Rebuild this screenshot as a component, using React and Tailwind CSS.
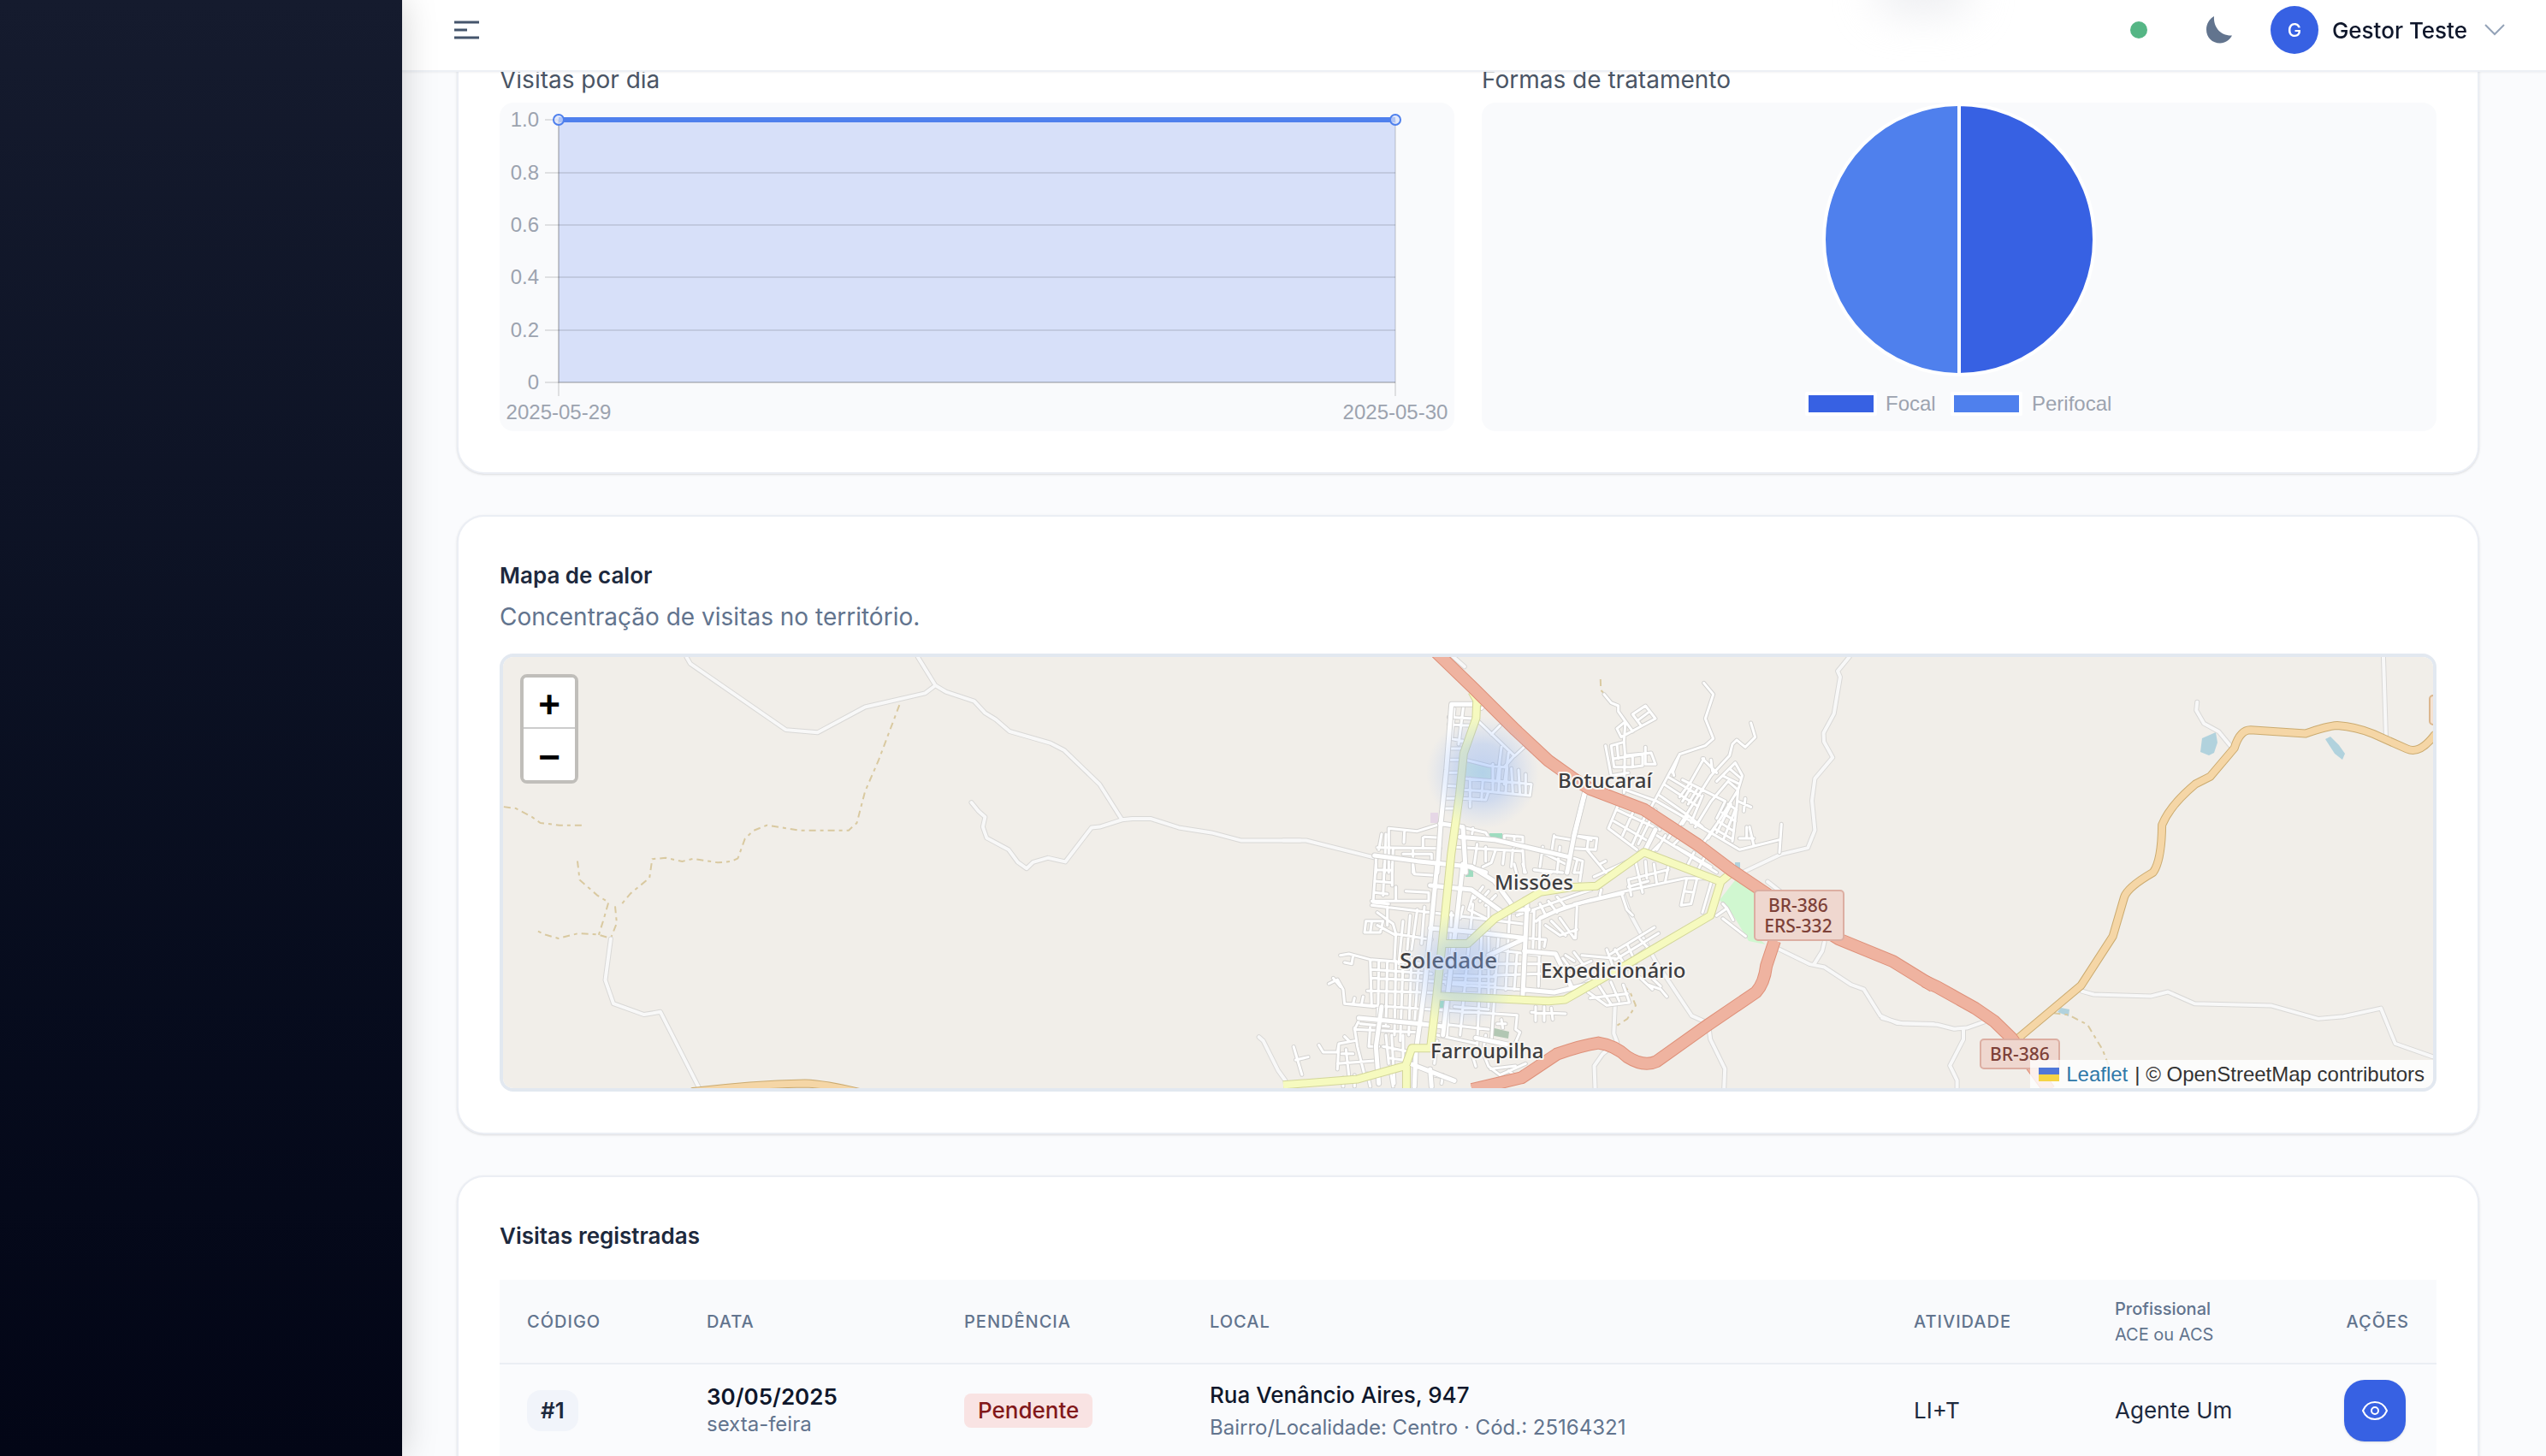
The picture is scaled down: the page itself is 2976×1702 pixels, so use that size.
import { Fragment, useId } from 'react';

const visits = [
  {
    id: 1,
    date: '30/05/2025',
    weekday: 'sexta-feira',
    status: 'Pendente',
    address: 'Rua Venâncio Aires, 947',
    detail: 'Bairro/Localidade: Centro · Cód.: 25164321',
    activity: 'LI+T',
    agent: 'Agente Um',
  },
];

const yTicks = [
  { label: '1.0', y: 20 },
  { label: '0.8', y: 82 },
  { label: '0.6', y: 143 },
  { label: '0.4', y: 204 },
  { label: '0.2', y: 266 },
  { label: '0', y: 327 },
];

// Each tile keeps its own coordinate space, strokes stay in map pixels
const tiles = {
  west: 'translate(520 590) scale(.6378 .4592)',
  center: 'translate(1500 750) scale(.4847 .3444)',
  east: 'translate(2200 750) scale(.4949 .3827)',
  north: 'translate(1540 760) scale(.3333)',
  south: 'translate(1540 1010) scale(.3333)',
  botucarai: 'translate(1840 780) scale(.3333)',
};

const tracks = [
  { tile: 'west', d: 'M108 769L130 773L160 795L175 810L210 816L258 816M833 510L795 650L770 730L755 810L740 829L650 829L590 816L565 830L550 850L537 900L525 908L500 911L455 901L435 908L405 899L380 902L375 950L340 990L325 1015M243 907L247 955L280 995L300 1012L290 1060L282 1095M312 1022L315 1065L304 1104L280 1094L245 1091L208 1104L185 1095L165 1082' },
  { tile: 'center', d: 'M765 128L766 165L778 182M820 1165L838 1195L850 1235L830 1280L800 1308' },
  { tile: 'east', d: 'M405 1135L440 1140L485 1170L520 1245L540 1310L570 1350' },
];

const lanes = [
  { tile: 'west', d: 'M443 388L450 405L625 573L683 580L770 515L880 480L899 460M867 388L899 460L918 476L970 500L990 530L1010 547L1035 577L1110 607L1135 625L1200 712L1241 802M965 758L978 780L990 795L986 820L993 848L1033 878L1050 910L1066 926L1078 910L1105 899L1137 909L1185 822L1200 820L1241 802L1260 799L1293 799L1345 822L1405 835L1460 855L1568 855M304 1105L294 1210L309 1270L365 1298L395 1291L466 1485M1492 1355L1500 1365L1527 1440L1540 1465' },
  { tile: 'center', d: 'M0 675L55 675L225 735M1365 52L1337 100L1343 120L1328 245L1303 310L1304 340L1325 393L1282 465L1275 540L1282 640L1265 700L1200 722L1105 785M820 860L835 920L900 1090L985 1270L1025 1295L1030 1350L1065 1450L1063 1515M800 1235L797 1330L805 1360L770 1400L750 1440L752 1515M1190 1040L1270 1095L1305 1105L1370 1165L1400 1180L1440 1270L1480 1295L1568 1298M1305 1020L1300 1050L1280 1095M405 45L437 85M1168 815L1200 850' },
  { tile: 'east', d: 'M744 185L742 210L760 250L795 275L825 322M1184 47L1190 290M472 1068L500 1078L635 1083L675 1070L738 1106L920 1112L1030 1152L1090 1145L1178 1120L1212 1228L1300 1268M0 1150L50 1167L130 1170L170 1183L200 1180L240 1162M192 1183L192 1215L160 1295L177 1340L177 1365' },
];

const streets = [
  { tile: 'north', d: 'M565 250L690 370L655 410L600 405L520 385M640 265L610 295M730 335L690 372M645 340L630 460M670 360L655 470M575 205L590 190M460 235L545 240M460 260L540 265M465 310L520 320M460 345L510 345M455 385L505 385M450 430L500 430M445 475L495 478M445 520L490 520M440 555L480 555M512 195L495 330M480 205L470 310M515 450L700 465L750 470L745 510L590 495M510 490L600 495L590 525L505 520M535 450L535 550M580 455L575 525M615 400L615 490M640 410L635 495M665 410L660 500M680 415L685 500M705 420L710 505M730 435L730 508M430 610L350 635L250 625L250 780M305 635L303 675M225 645L215 700M210 692L430 695M240 645L235 780M265 700L262 780M375 655L430 658M370 658L370 695M335 700L335 780M300 715L400 715L400 740M205 722L205 780M545 625L540 660M500 620L590 640L605 665M660 650L720 655L720 690M655 650L655 675M690 652L690 690M640 670L720 675M470 690L720 705M560 680L550 750M590 690L590 740M625 700L610 745L580 760M655 705L650 750M685 700L680 760M720 700L725 780M830 650L820 715M830 655L890 665M900 650L960 665M790 690L780 760M850 690L840 780M770 700L870 750M760 770L860 780M910 740L900 780' },
  { tile: 'south', d: 'M205 0L195 135L250 140M235 0L230 110M262 0L262 75M205 20L262 22M200 60L260 65M200 100L245 105M335 0L340 35L410 40M310 95L390 100L390 130L190 130M275 80L275 130M245 150L245 215M190 145L480 180L720 210M170 200L165 240L220 240L230 200L170 200M190 205L185 240M210 170L265 210M210 215L275 250M265 210L275 245L400 265M275 245L270 340M300 200L285 350M325 180L315 300M350 160L330 300M375 150L365 280M80 320L110 315L185 335L190 500M95 345L120 350L125 320M40 420L70 405L90 440L95 490L200 500M55 400L80 430M125 490L130 470M155 490L160 465M215 340L212 540M245 340L240 560M275 340L270 600M300 350L290 620M330 330L320 600M355 360L340 560M190 335L380 350M190 370L400 385M190 400L380 410L620 420M175 445L560 455M95 490L400 510L700 530M150 540L130 580L350 590M150 560L250 570M470 170L455 600M545 140L500 600M575 250L560 640M600 130L600 500M635 250L610 620M675 150L660 440M450 350L600 365M450 390L620 395M450 420L720 440M480 500L600 510M430 560L600 580M420 600L560 630M700 530L695 580L710 590L680 660M600 250L800 265L795 290M620 300L780 320M620 350L780 350M620 390L780 385M650 170L760 165M760 160L755 310M780 200L775 430M700 310L690 440M5 635L20 660L70 660L75 630L130 620M75 630L70 720M95 605L110 620M70 700L200 690M100 650L110 740M85 665L125 665M130 575L140 640L165 740M260 600L270 770M240 600L250 700M185 570L180 640L215 640M175 735L185 780M255 720L265 780M130 740L130 780M90 750L90 780M230 640L330 660M250 680L320 690M300 600L300 680M420 620L410 700M590 600L580 660L600 710L640 740L730 700M670 725L690 740M540 660L555 710M630 560L660 560M645 545L650 575M750 520L870 525M765 500L765 550M795 500L795 550M820 505L825 545M580 80L550 120M600 95L570 130M625 110L590 145M510 150L500 190M545 110L530 160L590 190M700 180L900 110L960 90M765 200L830 170L960 125M780 140L800 180M810 130L840 170M840 115L870 150M800 215L850 250L910 230M820 200L870 250M850 190L900 260M910 150L905 260M690 0L700 40M720 0L730 30M760 20L820 30M870 320L900 340M860 330L890 370L960 340M900 310L930 350M440 740L435 770M400 740L430 745' },
  { tile: 'botucarai', d: 'M105 95L130 125L155 135L155 155L180 190L175 260L178 300L175 440M205 165L250 135L285 180L165 245L150 215L180 190L205 225M205 165L235 205M225 185L265 155M110 275L130 380L190 370M130 275L175 262M130 275L140 350L200 350L240 345L240 305L140 320M150 270L155 320M178 310L270 300L285 340L250 340L250 280M205 310L205 350M455 55L488 95L460 180L488 250L460 275L370 305L265 500M370 305L345 370M620 195L635 245L600 280L570 255L555 270L545 310L480 380L360 570M180 430L290 470L470 575M160 470L120 565L220 640M150 500L300 570M140 540L260 610M210 500L170 590M250 520L205 620M285 500L225 620M300 450L400 520L450 560M315 410L430 485M330 385L440 450M345 360L350 380M455 320L410 400L370 455M450 320L500 370M480 325L485 365M380 395L530 470L500 530M410 420L380 470M430 430L400 480M450 450L410 545M480 470L425 560M500 400L565 335L590 380L575 430L540 400M520 380L580 410M545 355L585 390M540 400L480 470M575 430L470 600M540 480L570 500M520 510L565 540M505 540L560 575M490 565L550 600M575 430L570 490L555 610M550 480L500 580M565 500L525 600M470 575L580 640L720 605M720 650L727 550M575 470L620 490M600 460L595 505M630 625L615 560M580 600L630 600M605 560L605 600M400 520L380 550M450 620L500 550M330 600L350 570M290 590L500 720M360 630L480 700M350 620L370 600M320 590L290 640M420 650L400 690M455 670L435 710M300 620L270 650M250 680L255 740M280 690L290 760M330 700L320 750M190 745L330 710M190 745L200 800M190 770L260 750M215 680L240 790M0 830L200 780L390 740L470 740M395 740L375 835L410 830L430 745M385 785L420 790M485 740L450 860M0 590L80 600L75 640L0 635M50 600L45 640L120 730M70 735L190 680M90 690L110 680M0 670L30 680L20 750M0 720L25 720M90 800L95 780M165 790L185 850L205 870' },
  { tile: 'center', d: 'M610 950L620 935L680 900L820 855M1045 930L1070 905L1085 945M1060 940L1115 1000M1070 905L1060 890M720 1065L800 1075M780 1045L800 1120M800 1045L830 1110M830 1030L850 1090M790 1060L895 970M800 1080L905 990M830 1090L880 1040M860 1010L880 1040M700 1180L740 1150M735 1190L780 1235L835 1225L820 1165M760 1165L790 1230M740 1210L830 1195M790 1155L810 1220M880 1165L910 1180L925 1205M880 1130L910 1170M860 1140L890 1180M500 1450L560 1440M25 1375L45 1470M30 1420L60 1410' },
];

const avenues = [
  { tile: 'north', d: 'M420 780L432 610L452 420L470 190L545 190M430 608L510 620L520 780M200 720L350 740L540 760M500 655L620 665L730 690L880 725M940 490L900 650L875 780M535 760L590 780' },
  { tile: 'south', d: 'M420 0L400 200L375 440L345 660M510 0L490 180L440 600M395 75L540 90L650 170M540 10L620 60L680 140M680 160L740 160M735 140L720 460M395 225L560 240L730 260L600 320M725 305L835 315L890 430M720 440L830 450L960 420M145 540L360 560L440 570M225 500L205 640L215 770M325 700L480 760M345 660L340 780M395 720L400 780M555 610L700 640' },
  { tile: 'botucarai', d: 'M40 430L0 590M285 570L250 640' },
];

const primary = [
  { tile: 'center', d: 'M467 190L465 260L435 380L425 520L405 720L385 1000L370 1200L355 1380L310 1380L295 1440L180 1485L0 1505M297 1440L297 1520M385 1025L445 1025L510 940L620 850L700 833L755 830L870 715L1055 815L1080 785M1055 815L1030 930L830 1095L680 1215L640 1220L370 1203M455 170L467 200L480 205' },
];

const secondary = [
  { tile: 'west', d: 'M455 1494Q560 1476 660 1473Q700 1475 765 1498' },
  { tile: 'east', d: 'M318 1215L470 1050L545 900L572 780Q580 750 640 705Q660 670 661 560Q680 500 740 435L775 412L832 325Q845 270 870 270L1000 281Q1050 258 1075 256Q1120 260 1160 282L1240 328Q1270 345 1305 285' },
];

const trunk = [
  { tile: 'center', d: 'M368 35L460 160L560 300L640 405L700 465L740 500L870 570L1000 690L1080 775L1170 860L1340 1010L1470 1085L1568 1170M455 1520L575 1480L660 1400Q720 1370 760 1362Q800 1370 830 1410Q870 1445 900 1425L1020 1305L1140 1190Q1160 1160 1165 1100L1185 1015' },
  { tile: 'east', d: 'M100 1037L130 1055L220 1120L265 1160L305 1210L395 1370' },
];

function Roads({ paths, color, casing, width, cap = 'round', dash }) {
  const line = (stroke, strokeWidth) =>
    paths.map(({ tile, d }, i) => (
      <path
        key={`${tile}-${i}-${stroke}`}
        d={d}
        transform={tiles[tile]}
        fill="none"
        stroke={stroke}
        strokeWidth={strokeWidth}
        strokeLinecap={cap}
        strokeLinejoin="round"
        strokeDasharray={dash}
        vectorEffect="non-scaling-stroke"
      />
    ));
  return (
    <g>
      {casing && line(casing, width + 2)}
      {line(color, width)}
    </g>
  );
}

function Place({ x, y, size = 24, children }) {
  return (
    <text x={x} y={y} fontSize={size} fill="#3d3d3f" stroke="#f8f6f3" strokeWidth="4" strokeLinejoin="round" paintOrder="stroke">
      {children}
    </text>
  );
}

function StreetMap() {
  const heat = useId();
  return (
    <svg
      className="block h-full w-full"
      viewBox="588 768 2256 504"
      preserveAspectRatio="xMidYMid slice"
      fontFamily="'Noto Sans', sans-serif"
      fontWeight="500"
      role="img"
      aria-label="Mapa de Soledade"
    >
      <defs>
        <radialGradient id={heat}>
          <stop offset="0" stopColor="#7fabf8" stopOpacity="0.44" />
          <stop offset="0.5" stopColor="#8cb2f6" stopOpacity="0.34" />
          <stop offset="1" stopColor="#a9c6f8" stopOpacity="0" />
        </radialGradient>
      </defs>
      <rect x="588" y="768" width="2256" height="504" fill="#f1eee9" />

      <g>
        <path d="M2032 1024L2054 1044L2054 1096L2064 1104L2044 1100L2026 1070L2010 1052Z" fill="#d0f7d0" />
        <path d="M1715 891L1747 894L1744 911L1713 907Z" fill="#dcf0dc" />
        <rect x="1741" y="974" width="15" height="9" fill="#9fdcc0" />
        <rect x="1713" y="1015" width="9" height="10" fill="#9fdcc0" />
        <rect x="1683" y="1170" width="7" height="8" fill="#9fdcc0" />
        <path d="M1743 1201L1764 1206L1763 1214L1742 1210Z" fill="#b2c7b3" />
        <rect x="1672" y="950" width="9" height="12" fill="#e6d7e6" />
        <path d="M2574 863L2590 856L2592 868L2588 880L2582 883L2572 879Z" fill="#b1d2dd" />
        <path d="M2718 864L2724 861L2734 871L2741 881L2738 888L2729 881Z" fill="#b1d2dd" />
        <path d="M2028 1008h6v7h-6zM2409 1178L2419 1180L2418 1188L2405 1183Z" fill="#b1d2dd" />
      </g>

      <Roads paths={tracks} color="#d9c9a0" width={2} cap="butt" dash="8 5 4 5" />
      <Roads paths={lanes} color="#f8f8f8" casing="#d9d8d6" width={4} />
      <Roads paths={streets} color="#ffffff" casing="#d3d2d0" width={3} />
      <Roads paths={avenues} color="#ffffff" casing="#d3d2d0" width={5} />
      <Roads paths={secondary} color="#f5d6a6" casing="#cbab70" width={8} />
      <Roads paths={primary} color="#f6fabf" casing="#d3d69a" width={8} cap="butt" />
      <Roads paths={trunk} color="#efb3a0" casing="#de9079" width={13} cap="butt" />

      <g fontSize="21" textAnchor="middle" fill="#7d4138">
        <rect x="2051" y="1041" width="104" height="58" rx="4" fill="#efd7cf" stroke="#dcaea2" strokeWidth="2" />
        <text x="2102" y="1066">BR-386</text>
        <text x="2102" y="1090">ERS-332</text>
        <rect x="2315" y="1215" width="92" height="34" rx="4" fill="#efd7cf" stroke="#dcaea2" strokeWidth="2" />
        <text x="2361" y="1240">BR-386</text>
        <rect x="2840" y="813" width="60" height="34" rx="4" fill="#f5e2d2" stroke="#dcb78e" strokeWidth="2" />
      </g>

      <Place x={1821} y={921}>Botucaraí</Place>
      <Place x={1747} y={1040}>Missões</Place>
      <Place x={1636} y={1132} size={26}>Soledade</Place>
      <Place x={1801} y={1143}>Expedicionário</Place>
      <Place x={1672} y={1237}>Farroupilha</Place>

      <circle cx="1733" cy="903" r="66" fill={`url(#${heat})`} />
      <circle cx="1709" cy="1134" r="68" fill={`url(#${heat})`} />
    </svg>
  );
}

function VisitsChart() {
  return (
    <svg
      className="block h-96 w-full"
      viewBox="0 0 1116 384"
      fontFamily="'Liberation Sans', Arial, sans-serif"
      fontSize="24"
      fill="#9ca3af"
      role="img"
      aria-label="Visitas por dia"
    >
      <rect x="69" y="20" width="978" height="307" fill="#d7e0f9" />
      {yTicks.map(({ label, y }) => (
        <Fragment key={label}>
          <path d={`M53 ${y}H1047`} stroke="#000" strokeOpacity="0.1" strokeWidth="2" />
          <text x="46" y={y + 8} textAnchor="end">{label}</text>
        </Fragment>
      ))}
      <path d="M69 20V343M1047 20V343" stroke="#000" strokeOpacity="0.1" strokeWidth="2" />
      <path d="M69 20V327H1047" fill="none" stroke="#000" strokeOpacity="0.1" strokeWidth="2" />
      <path d="M69 20H1047" stroke="#4f80ed" strokeWidth="6" />
      <circle cx="69" cy="20" r="6" fill="#d7e0f9" fillOpacity="0.7" stroke="#4f80ed" strokeWidth="2" />
      <circle cx="1047" cy="20" r="6" fill="#d7e0f9" fillOpacity="0.7" stroke="#4f80ed" strokeWidth="2" />
      <text x="69" y="370" textAnchor="middle">2025-05-29</text>
      <text x="1047" y="370" textAnchor="middle">2025-05-30</text>
    </svg>
  );
}

function TreatmentChart() {
  return (
    <svg
      className="block h-96 w-full"
      viewBox="0 0 1116 384"
      fontFamily="'Liberation Sans', Arial, sans-serif"
      fontSize="24"
      fill="#9ca3af"
      role="img"
      aria-label="Formas de tratamento"
    >
      <g stroke="#fff" strokeWidth="4" strokeLinejoin="round">
        <path d="M558 2A158 158 0 0 1 558 318Z" fill="#3761e3" />
        <path d="M558 318A158 158 0 0 1 558 2Z" fill="#4f80ed" />
        <rect x="380" y="340" width="80" height="24" fill="#3761e3" />
        <rect x="550" y="340" width="80" height="24" fill="#4f80ed" />
      </g>
      <text x="472" y="360">Focal</text>
      <text x="643" y="360">Perifocal</text>
    </svg>
  );
}

function Card({ children }) {
  return (
    <section className="rounded-4xl border-2 border-[#ebeef4] bg-white p-12 shadow-sm">
      {children}
    </section>
  );
}

function Header() {
  return (
    <header className="sticky top-0 z-10 flex h-21 items-center justify-between overflow-hidden border-b-2 border-[#edf0f5] bg-white pr-12 pb-3 pl-15 shadow-xs">
      <button type="button" aria-label="Alternar menu" className="text-slate-600">
        <svg className="block size-8" viewBox="0 0 32 32" fill="none" stroke="currentColor" strokeWidth="3">
          <path d="M1 7H30M1 16H16M1 25H30" />
        </svg>
      </button>
      <div className="absolute -top-10 right-168 h-14 w-28 rounded-full bg-gray-200/70 blur-xl" />
      <div className="relative flex items-center">
        <span className="size-5 rounded-full bg-[#55b685]" />
        <button type="button" aria-label="Tema escuro" className="mr-11 ml-17 text-slate-500">
          <svg className="block size-8" viewBox="0 0 32 32" fill="currentColor">
            <path d="M10 0C9 12 17 23 31 22.500C28 28 23 31.500 17 31.500C8 31.500 1 25 1 15.500C1 9 4.500 3 10 0Z" />
          </svg>
        </button>
        <button type="button" className="flex items-center">
          <span className="flex size-14 items-center justify-center rounded-full bg-[#3761e3] text-[22px] font-medium text-white">G</span>
          <span className="ml-4 text-[26px] font-medium text-slate-900">Gestor Teste</span>
          <svg className="ml-5 block h-4 w-6" viewBox="0 0 24 16" fill="none" stroke="#94a3b8" strokeWidth="2">
            <path d="M1 2L12 13L23 2" />
          </svg>
        </button>
      </div>
    </header>
  );
}

function VisitsTable() {
  return (
    <table className="w-full table-fixed text-left">
      <thead className="bg-[#f9fafc] text-xl tracking-wider text-slate-500 uppercase">
        <tr className="h-[98px] border-b-2 border-[#ebeef4]">
          <th scope="col" className="w-[210px] px-8 font-medium">Código</th>
          <th scope="col" className="w-[301px] px-8 font-medium">Data</th>
          <th scope="col" className="w-[287px] px-8 font-medium">Pendência</th>
          <th scope="col" className="px-8 font-medium">Local</th>
          <th scope="col" className="w-[235px] px-8 font-medium">Atividade</th>
          <th scope="col" className="w-[235px] pl-8 leading-[30px] font-medium tracking-normal normal-case">
            Profissional
            <span className="block font-normal">ACE ou ACS</span>
          </th>
          <th scope="col" className="w-[173px] pr-8 text-right font-medium">Ações</th>
        </tr>
      </thead>
      <tbody>
        {visits.map((visit) => (
          <tr key={visit.id} className="h-27 bg-[#fafbfd] text-[26px] text-slate-800">
            <td className="px-8">
              <span className="inline-flex h-12 items-center rounded-2xl bg-[#f1f4fa] px-4 font-semibold">#{visit.id}</span>
            </td>
            <td className="px-8">
              <div className="leading-8 font-semibold text-slate-900">{visit.date}</div>
              <div className="text-2xl leading-8 text-slate-500">{visit.weekday}</div>
            </td>
            <td className="px-8">
              <span className="inline-flex h-10 items-center rounded-lg bg-[#f9e3e3] px-4 font-medium text-red-900">{visit.status}</span>
            </td>
            <td className="px-8">
              <div className="leading-10 font-medium text-slate-900">{visit.address}</div>
              <div className="text-2xl leading-9 text-slate-500">{visit.detail}</div>
            </td>
            <td className="px-8">{visit.activity}</td>
            <td className="pl-8">{visit.agent}</td>
            <td className="pr-9">
              <button type="button" aria-label="Ver visita" className="ml-auto flex size-18 items-center justify-center rounded-3xl bg-[#3761e3] text-white shadow-sm">
                <svg className="h-6 w-8" viewBox="0 0 32 24" fill="none" stroke="currentColor" strokeWidth="2">
                  <path d="M2 12C5 5 10 2 16 2S27 5 30 12C27 19 22 22 16 22S5 19 2 12Z" />
                  <circle cx="16" cy="12" r="4" />
                </svg>
              </button>
            </td>
          </tr>
        ))}
      </tbody>
    </table>
  );
}

export default function App() {
  return (
    <div className="flex h-screen overflow-hidden bg-[#fafbfd] font-['Inter',sans-serif]">
      <aside className="z-20 w-[470px] shrink-0 bg-linear-to-b from-[#151b2e] to-[#030616] shadow-[0_0_40px_rgba(0,0,0,0.18)]" />

      <div className="min-w-0 flex-1">
        <Header />
        <main className="-mt-[62px] flex flex-col gap-12 pr-[78px] pl-16">
          <Card>
            <div className="grid grid-cols-2 gap-8">
              <div>
                <h3 className="mb-1.5 text-[28px] leading-[42px] text-gray-600">Visitas por dia</h3>
                <div className="overflow-hidden rounded-2xl bg-[#f9fafc]">
                  <VisitsChart />
                </div>
              </div>
              <div>
                <h3 className="mb-1.5 text-[28px] leading-[42px] text-gray-600">Formas de tratamento</h3>
                <div className="overflow-hidden rounded-2xl bg-[#f9fafc]">
                  <TreatmentChart />
                </div>
              </div>
            </div>
          </Card>

          <Card>
            <h2 className="text-[26px] leading-[42px] font-semibold text-slate-800">Mapa de calor</h2>
            <p className="mt-1.5 text-[28px] leading-[42px] text-slate-500">Concentração de visitas no território.</p>
            <div className="relative mt-5.5 h-128 overflow-hidden rounded-2xl border-4 border-slate-200 font-['Liberation_Sans',sans-serif]">
              <StreetMap />
              <div className="absolute top-5 left-5 w-17 overflow-hidden rounded-lg border-4 border-black/20 bg-clip-padding text-center text-[44px] font-bold text-black">
                <button type="button" aria-label="Aumentar zoom" className="block h-[60px] w-full border-b-2 border-[#ccc] bg-white pt-1.5 leading-[52px]">+</button>
                <button type="button" aria-label="Diminuir zoom" className="block h-[60px] w-full bg-white pt-1.5 leading-[52px]">−</button>
              </div>
              <div className="absolute right-0 bottom-0 flex items-center bg-white/80 px-2.5 text-2xl leading-[33px] text-[#333]">
                <span className="mr-2 h-4 w-6 bg-linear-to-b from-[#5077d8] from-50% to-[#f5d445] to-50%" />
                <a href="#leaflet" className="text-[#2f78a8]">Leaflet</a>
                <span className="ml-2">| © OpenStreetMap contributors</span>
              </div>
            </div>
          </Card>

          <Card>
            <h2 className="mb-7.5 text-[26px] leading-[42px] font-semibold text-slate-800">Visitas registradas</h2>
            <VisitsTable />
          </Card>
        </main>
      </div>
    </div>
  );
}
